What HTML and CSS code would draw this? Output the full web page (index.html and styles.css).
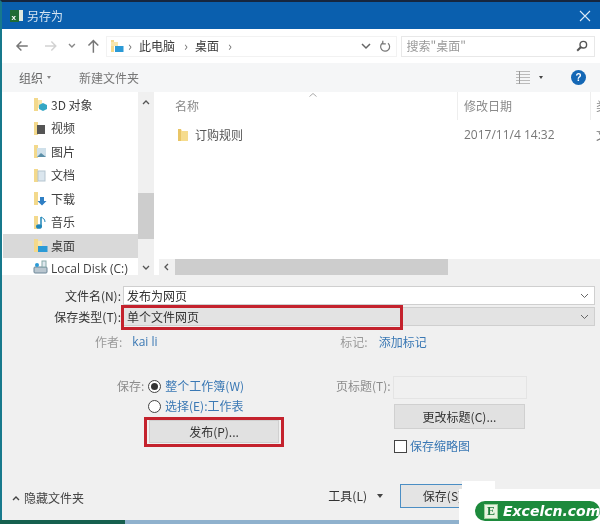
FILE: index.html
```html
<!DOCTYPE html>
<html lang="zh">
<head>
<meta charset="utf-8">
<title>另存为</title>
<link rel="stylesheet" href="styles.css">
</head>
<body>
<div class="screen">
  <div class="dialog">
    <header class="titlebar">
      <svg class="excel-icon" width="15" height="14" viewBox="0 0 15 14"><rect x="8" y="1" width="6" height="11" fill="#dfe9e0"/><rect x="1" y="1" width="9" height="12" fill="#1f6b35"/><text x="2.6" y="10.5" class="excel-x">x</text></svg>
      <span class="title-text">另存为</span>
      <svg class="close-icon" width="12" height="12" viewBox="0 0 12 12"><path d="M1 1l10 10M11 1L1 11" stroke="#dce9f5" stroke-width="1.1" fill="none"/></svg>
    </header>

    <div class="navbar">
      <svg class="nav-btn back" width="14" height="12" viewBox="0 0 14 12"><path d="M13 6H2M6.5 1.5L2 6l4.5 4.5" stroke="#777" stroke-width="1.5" fill="none"/></svg>
      <svg class="nav-btn forward" width="14" height="12" viewBox="0 0 14 12"><path d="M1 6h11M7.5 1.5L12 6l-4.500 4.500" stroke="#d2d2d2" stroke-width="1.500" fill="none"/></svg>
      <svg class="nav-btn drop" width="8" height="6" viewBox="0 0 8 6"><path d="M1 1l3 3 3-3" stroke="#888" stroke-width="1.400" fill="none"/></svg>
      <svg class="nav-btn up" width="13" height="14" viewBox="0 0 13 14"><path d="M6.500 14V2M1.500 6.500l5-5 5 5" stroke="#777" stroke-width="1.500" fill="none"/></svg>
      <div class="address">
        <svg width="14" height="14" viewBox="0 0 14 14"><path d="M1 1h3v12H1z" fill="#f3d98c"/><path d="M1 3h7v4H1z" fill="#f8e6ae"/><rect x="5" y="7" width="8.500" height="6" fill="#2b9ad6"/></svg>
        <span class="crumb-sep">›</span><span class="crumb">此电脑</span>
        <span class="crumb-sep">›</span><span class="crumb">桌面</span>
        <span class="crumb-sep">›</span>
        <span class="spring"></span>
        <svg width="10" height="7" viewBox="0 0 10 7"><path d="M1 1l4 4 4-4" stroke="#666" stroke-width="1.500" fill="none"/></svg>
        <svg class="refresh" width="12" height="13" viewBox="0 0 12 13"><path d="M3.500 3A4.500 4.500 0 1 0 9 3.200M3.800 .8v3h3" stroke="#777" stroke-width="1.200" fill="none"/></svg>
      </div>
      <div class="search">
        <span class="search-text">搜索"桌面"</span>
        <svg width="12" height="12" viewBox="0 0 12 12"><circle cx="7.300" cy="4.700" r="3.300" stroke="#555" stroke-width="1.400" fill="none"/><path d="M5 7L1.200 10.800" stroke="#555" stroke-width="2"/></svg>
      </div>
    </div>

    <div class="cmdbar">
      <span class="cmd">组织</span><span class="cmd-caret"></span>
      <span class="cmd new-folder">新建文件夹</span>
      <span class="spring"></span>
      <svg class="view-icon" width="14" height="13" viewBox="0 0 14 13"><path d="M0 .5h14M0 3.500h14M0 6.500h14M0 9.500h14M0 12.500h14" stroke="#bbb"/><path d="M3.500 0v13" stroke="#999"/></svg>
      <span class="cmd-caret dark"></span>
      <span class="help">?</span>
    </div>

    <div class="browser">
      <nav class="tree">
        <div class="tree-items">
          <div class="tree-row"><svg class="ti" width="14" height="15" viewBox="0 0 14 15"><path d="M0 1h4v13H0z" fill="#f3d98c"/><path d="M4 3h4v8H4z" fill="#f8e6ae"/><path d="M5 8l4-2 4 2v4l-4 2-4-2z" fill="#35a7c4"/></svg><span>3D 对象</span></div>
          <div class="tree-row"><svg class="ti" width="14" height="15" viewBox="0 0 14 15"><path d="M0 1h4v13H0z" fill="#f3d98c"/><rect x="3" y="4" width="8" height="9" fill="#555"/></svg><span>视频</span></div>
          <div class="tree-row"><svg class="ti" width="14" height="15" viewBox="0 0 14 15"><path d="M0 1h4v13H0z" fill="#f3d98c"/><rect x="3" y="4" width="9" height="9" fill="#cfe0ea"/><path d="M3 13l4-4 5 4z" fill="#5b8fa8"/></svg><span>图片</span></div>
          <div class="tree-row"><svg class="ti" width="14" height="15" viewBox="0 0 14 15"><path d="M0 1h4v13H0z" fill="#f3d98c"/><rect x="4" y="3" width="7" height="10" fill="#dbe6ee" stroke="#b5c5d0"/></svg><span>文档</span></div>
          <div class="tree-row"><svg class="ti" width="14" height="15" viewBox="0 0 14 15"><path d="M0 1h4v13H0z" fill="#f3d98c"/><path d="M6 6h4v4h2.500L8 14.500 3.500 10H6z" fill="#2f7fc4"/></svg><span>下载</span></div>
          <div class="tree-row"><svg class="ti" width="14" height="15" viewBox="0 0 14 15"><path d="M0 1h4v13H0z" fill="#f3d98c"/><path d="M7 2v9" stroke="#1f86b8" stroke-width="1.500"/><path d="M7 2c2 1 4 2 4 5" stroke="#1f86b8" fill="none"/><ellipse cx="5" cy="11.500" rx="3" ry="2.300" fill="#1f86b8"/></svg><span>音乐</span></div>
          <div class="tree-row selected"><svg class="ti" width="14" height="15" viewBox="0 0 14 15"><path d="M0 1h4v13H0z" fill="#f3d98c"/><path d="M4 3h4v5H4z" fill="#f8e6ae"/><rect x="4" y="8" width="9.500" height="6" fill="#2b9ad6"/></svg><span>桌面</span></div>
          <div class="tree-row disk"><svg class="ti" width="15" height="15" viewBox="0 0 15 15"><rect x="1" y="7" width="13" height="6" rx="1" fill="#b9c6cf" stroke="#6d8798"/><rect x="9" y="1" width="4" height="6" fill="#dfe8ee" stroke="#8aa"/><circle cx="4" cy="5" r="2" fill="#2b9ad6"/></svg><span class="latin">Local Disk (C:)</span></div>
        </div>
        <div class="vscroll">
          <svg class="sb-arrow" width="8" height="5" viewBox="0 0 8 5"><path d="M1 4l3-3 3 3" stroke="#555" stroke-width="1.300" fill="none"/></svg>
          <span class="vthumb"></span>
          <svg class="sb-arrow" width="8" height="5" viewBox="0 0 8 5"><path d="M1 1l3 3 3-3" stroke="#555" stroke-width="1.300" fill="none"/></svg>
        </div>
      </nav>

      <section class="files">
        <div class="file-head">
          <span class="col-name">名称</span>
          <svg class="sort" width="8" height="4" viewBox="0 0 8 4"><path d="M.5 3.500L4 .5l3.500 3" stroke="#aaa" fill="none"/></svg>
          <span class="col-date">修改日期</span>
          <span class="col-type">类型</span>
        </div>
        <div class="file-row">
          <svg class="file-icon" width="10" height="14" viewBox="0 0 10 14"><path d="M0 1h3l1 2h6v10H0z" fill="#f6dc8e"/><path d="M0 1h3v12H0z" fill="#e9c566"/></svg>
          <span class="file-name">订购规则</span>
          <span class="file-date latin">2017/11/4 14:32</span>
          <span class="file-type">文件夹</span>
        </div>
        <div class="hscroll">
          <svg class="sb-arrow" width="5" height="8" viewBox="0 0 5 8"><path d="M4 1L1 4l3 3" stroke="#555" stroke-width="1.300" fill="none"/></svg>
          <span class="hthumb"></span>
        </div>
      </section>
    </div>

    <form class="panel">
      <div class="field-row first">
        <label class="field-label">文件名(N):</label>
        <div class="combo"><span>发布为网页</span><svg width="9" height="6" viewBox="0 0 9 6"><path d="M1 1l3.500 3.500L8 1" stroke="#666" fill="none"/></svg></div>
      </div>
      <div class="field-row second">
        <label class="field-label">保存类型(T):</label>
        <div class="combo grey"><span>单个文件网页</span><svg width="9" height="6" viewBox="0 0 9 6"><path d="M1 1l3.500 3.500L8 1" stroke="#666" fill="none"/></svg><i class="red-box type-box"></i></div>
      </div>
      <div class="meta-row">
        <span class="meta-label author">作者:</span><span class="link author-val latin">kai li</span>
        <span class="meta-label tag">标记:</span><span class="link">添加标记</span>
      </div>

      <div class="options">
        <div class="save-col">
          <div class="radio-row"><span class="muted save-label">保存:</span><span class="radio on"></span><span class="link">整个工作簿(W)</span></div>
          <div class="radio-row two"><span class="radio"></span><span class="link">选择(E):工作表</span></div>
          <div class="publish-wrap"><button type="button" class="btn publish">发布(P)...</button><i class="red-box pub-box"></i></div>
        </div>
        <div class="title-col">
          <div class="title-row"><span class="muted page-label">页标题(T):</span><span class="page-input"></span></div>
          <button type="button" class="btn change">更改标题(C)...</button>
          <div class="thumb-row"><span class="check"></span><span class="link">保存缩略图</span></div>
        </div>
      </div>

      <div class="footer">
        <svg class="hide-chev" width="8" height="5" viewBox="0 0 8 5"><path d="M1 4l3-3 3 3" stroke="#444" stroke-width="1.400" fill="none"/></svg>
        <span class="hide-text">隐藏文件夹</span>
        <span class="spring"></span>
        <span class="tools">工具(L)</span><span class="cmd-caret dark tools-caret"></span>
        <button type="button" class="btn save">保存(S)</button>
      </div>
    </form>
  </div>
  <div class="taskstrip"><span class="strip-green"></span></div>

  <div class="watermark">
    <span class="wm-tab"></span>
    <div class="wm-body"><div class="wm-pill"><span class="wm-e">E</span><span class="wm-text">Excelcn.com</span></div></div>
  </div>
</div>
</body>
</html>
```

FILE: styles.css
```css
* { box-sizing: border-box; }
html, body { margin: 0; padding: 0; background: #fff; }
body { font: 12px/16px "Noto Sans CJK SC", "Noto Sans", sans-serif; color: #4a4a4a; }
.screen { position: relative; width: 600px; height: 524px; overflow: hidden; filter: blur(.5px); }
.latin { font-family: "Open Sans", "Noto Sans CJK SC", sans-serif; }
.spring { flex: 1; }

.dialog { height: 520px; display: flex; flex-direction: column; border-left: 2px solid #17798c; border-top: 2px solid #16263f; background: #fff; }
.taskstrip { height: 4px; background: #8fb1cd; display: flex; }
.strip-green { width: 125px; background: #16604f; }

.titlebar { height: 27px; flex: none; background: #0a5fae; display: flex; align-items: center; padding: 0 9px 0 7px; color: #d5e4f2; }
.excel-icon { flex: none; }
.excel-x { font: bold 8px "Liberation Sans", sans-serif; fill: #fff; }
.title-text { margin-left: 3px; font-size: 12px; }
.close-icon { margin-left: auto; }

.navbar { height: 34px; flex: none; display: flex; align-items: center; background: #fff; padding: 0 5px 0 13px; }
.back { margin-right: 15px; }
.forward { margin-right: 11px; }
.drop { margin-right: 11px; }
.up { margin-right: 6px; }
.address { width: 296px; height: 21px; display: flex; align-items: center; border: 1px solid #f2f2f2; padding: 0 5px 0 3px; }
.crumb { color: #3c3c3c; margin: 0 5px 0 7px; }
.crumb-sep { color: #777; font-size: 13px; margin-left: 4px; }
.refresh { margin-left: 8px; }
.search { width: 198px; height: 21px; margin-left: 4px; display: flex; align-items: center; justify-content: space-between; border: 1px solid #e8e8e8; padding: 0 6px 0 5px; }
.search-text { color: #9a9a9a; }

.cmdbar { height: 29px; flex: none; display: flex; align-items: center; background: #f5f6f7; padding: 0 14px 0 17px; }
.cmd { color: #666; }
.cmd-caret { width: 0; height: 0; margin-left: 4px; border: 2px solid transparent; border-top: 3px solid #888; border-bottom: 0; }
.cmd-caret.dark { border-top-color: #444; }
.new-folder { margin-left: 28px; color: #777; }
.view-icon { margin-right: 5px; }
.help { width: 15px; height: 15px; margin-left: 28px; border-radius: 50%; background: #1467b5; color: #fff; font: bold 10px/15px "Liberation Sans", sans-serif; text-align: center; }

.browser { height: 183px; flex: none; display: flex; }
.tree { width: 152px; flex: none; display: flex; }
.tree-items { width: 136px; overflow: hidden; padding: 1px 0 0 1px; }
.tree-row { height: 23.500px; display: flex; align-items: center; padding-left: 31px; color: #3f3f3f; }
.tree-row .ti { margin-right: 3px; flex: none; }
.tree-row.selected { background: #d9d9d9; }
.tree-row.disk { height: 17px; padding-left: 30px; align-items: flex-end; line-height: 13px; white-space: nowrap; }
.vscroll { width: 16px; background: #f0f0f0; display: flex; flex-direction: column; align-items: center; padding-top: 8px; position: relative; }
.sb-arrow { flex: none; }
.vthumb { display: block; width: 16px; height: 46px; margin-top: 88px; margin-bottom: 26px; background: #cdcdcd; }

.files { flex: 1; display: flex; flex-direction: column; min-width: 0; }
.file-head { height: 28px; flex: none; display: flex; align-items: center; position: relative; padding-left: 21px; color: #8a8a8a; white-space: nowrap; overflow: hidden; }
.col-name { width: 282px; flex: none; }
.sort { position: absolute; left: 155px; top: 1px; }
.col-date { width: 134px; flex: none; padding-left: 6px; height: 28px; line-height: 28px; border-left: 1px solid #eee; border-right: 1px solid #eee; }
.col-type { margin-left: 5px; flex: none; }
.file-row { height: 30px; flex: none; display: flex; align-items: center; padding-left: 24px; white-space: nowrap; overflow: hidden; color: #555; }
.file-icon { flex: none; }
.file-name { margin-left: 7px; width: 269px; flex: none; }
.file-date { color: #777; width: 132px; flex: none; }
.file-type { color: #777; flex: none; }
.hscroll { margin-top: auto; margin-left: 5px; height: 16px; flex: none; background: #f0f0f0; display: flex; align-items: center; padding-left: 5px; }
.hthumb { display: block; width: 273px; height: 16px; margin-left: 6px; background: #cdcdcd; }

.panel { flex: 1; background: #f0f0f0; display: flex; flex-direction: column; min-height: 0; padding-right: 5px; }
.field-row { display: flex; height: 19px; }
.field-row.first { margin-top: 11px; }
.field-row.second { margin-top: 2px; }
.field-label { width: 119px; text-align: right; color: #333; line-height: 19px; flex: none; }
.combo { margin-left: 2px; flex: 1; display: flex; align-items: center; justify-content: space-between; padding: 0 5px 0 3px; background: #fff; border: 1px solid #cfcfcf; position: relative; color: #333; }
.combo.grey { background: #e3e3e3; }
.red-box { position: absolute; display: block; border: 3px solid #c4222d; pointer-events: none; }
.type-box { left: -3px; top: -3px; width: 282px; height: 25px; }

.meta-row { display: flex; height: 16px; margin-top: 8px; line-height: 16px; }
.meta-label { color: #9a9a9a; }
.author { margin-left: 93px; }
.author-val { margin-left: 10px; width: 208px; }
.tag { margin-right: 11px; margin-left: 0; }
.link { color: #3a78b4; }
.muted { color: #8c8c8c; }

.options { display: flex; margin-top: 26px; }
.save-col { width: 391px; padding-left: 115px; position: relative; }
.radio-row { display: flex; align-items: center; height: 20px; }
.radio-row.two { padding-left: 31px; }
.save-label { margin-right: 4px; }
.radio { width: 13px; height: 13px; border: 1px solid #444; border-radius: 50%; background: #fff; margin-right: 4px; flex: none; position: relative; }
.radio.on::after { content: ""; position: absolute; left: 2px; top: 2px; width: 7px; height: 7px; border-radius: 50%; background: #333; }
.publish-wrap { position: relative; margin: 4px 0 0 32px; width: 130px; height: 23px; }
.btn { font: inherit; color: #333; background: #e1e1e1; border: 1px solid #d0d0d0; padding: 0; }
.publish { width: 130px; height: 23px; display: block; }
.pub-box { left: -5px; top: -3px; width: 140px; height: 30px; }

.title-col { width: 134px; }
.title-row { position: relative; height: 23px; }
.page-label { position: absolute; left: -57px; top: 2px; }
.page-input { display: block; height: 23px; border: 1px solid #e4e4e4; background: #f0f0f0; }
.change { display: block; width: 131px; height: 25px; margin: 5px 0 0 1px; }
.thumb-row { display: flex; align-items: center; height: 16px; margin: 9px 0 0 1px; }
.check { width: 13px; height: 13px; border: 1px solid #444; background: #fff; margin-right: 3px; flex: none; }

.footer { display: flex; align-items: center; height: 24px; margin-top: auto; margin-bottom: 12px; padding-left: 10px; }
.hide-text { margin-left: 4px; color: #444; position: relative; top: 2px; }
.hide-chev { position: relative; top: 2px; }
.tools { color: #333; }
.tools-caret { margin-left: 10px; margin-right: 17px; border-width: 3px; border-top-width: 4px; }
.save { width: 85px; height: 24px; margin-right: 110px; background: #e4e4e4; border: 1px solid #4b8ec4; }

.watermark { position: absolute; left: 459px; top: 481px; width: 141px; height: 43px; }
.wm-tab { position: absolute; left: 3px; top: 0; width: 33px; height: 8px; background: #fff; }
.wm-body { position: absolute; left: 0; right: 0; top: 8px; bottom: 0; background: #fff; padding: 12px 0 0 16px; }
.wm-pill { width: 125px; height: 20px; border-radius: 10px; background: #1d8a3c; display: flex; align-items: center; padding-left: 9px; }
.wm-e { width: 14px; height: 15px; background: #e8f3e0; border: 1px solid #9ccf9c; color: #1d7a3a; font: bold 12px/13px "Liberation Serif", serif; text-align: center; flex: none; }
.wm-text { margin-left: 5px; color: #fff; font: italic bold 14px/20px "DejaVu Sans", sans-serif; white-space: nowrap; }
```
